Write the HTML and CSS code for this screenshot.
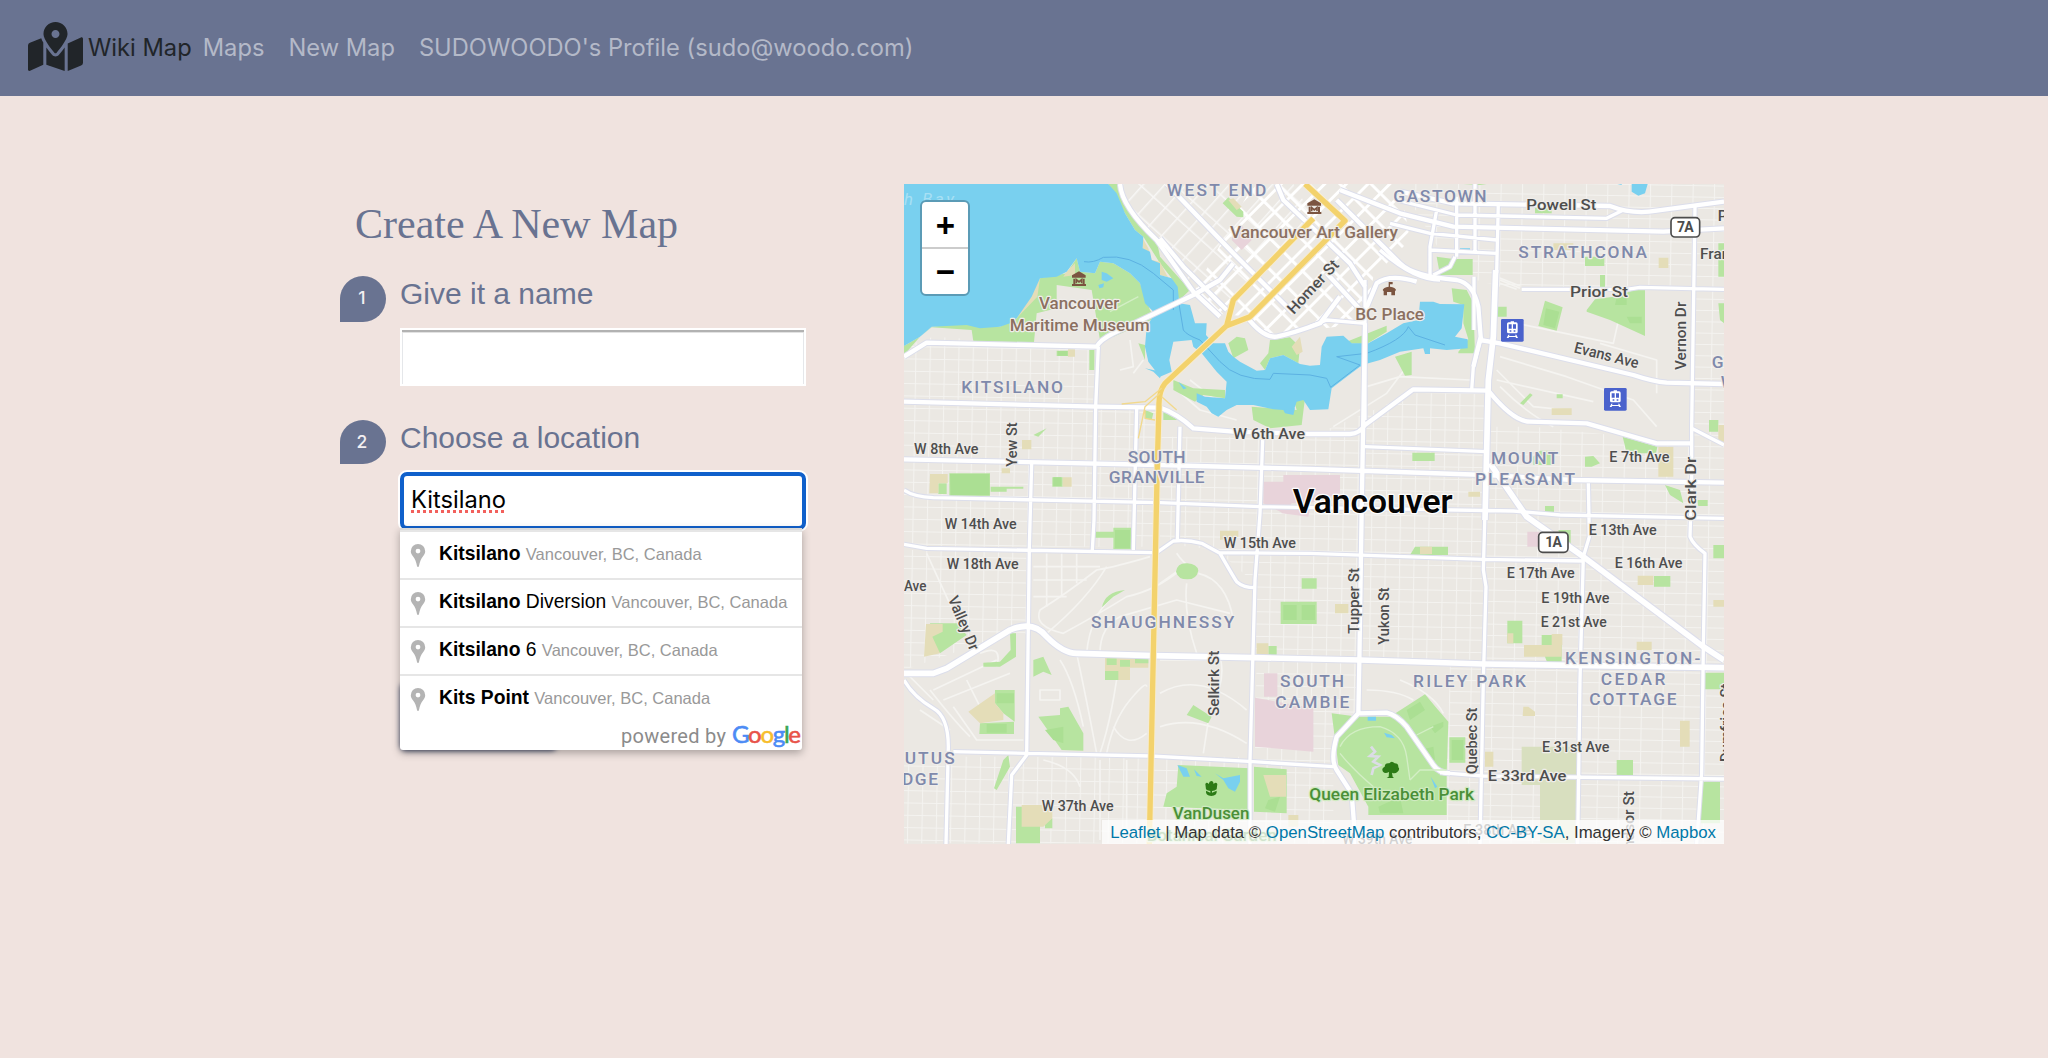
FILE: index.html
```html
<!DOCTYPE html>
<html lang="en">
<head>
<meta charset="utf-8">
<title>Wiki Map</title>
<link rel="stylesheet" href="styles.css">
</head>
<body>
<nav class="navbar">
  <a class="brand" href="#">
    <svg class="brand-icon" viewBox="0 0 576 512"><path d="M288 0c-69.590 0-126 56.410-126 126 0 56.260 82.350 158.800 113.900 196.020 6.390 7.540 17.820 7.540 24.200 0C331.650 284.800 414 182.260 414 126 414 56.410 357.590 0 288 0zm0 168c-23.200 0-42-18.800-42-42s18.800-42 42-42 42 18.800 42 42-18.800 42-42 42zM20.120 215.950A32.006 32.006 0 0 0 0 245.660v250.320c0 11.320 11.430 19.060 21.940 14.860L160 448V214.920c-8.840-15.980-16.070-31.540-21.250-46.420L20.120 215.950zM288 359.670c-14.070 0-27.380-6.180-36.510-16.960-19.660-23.200-40.570-49.620-59.490-76.720v182l192 64V266c-18.920 27.090-39.820 53.520-59.490 76.720-9.130 10.770-22.440 16.950-36.510 16.950zm266.060-198.510L416 224v288l139.880-55.950A31.996 31.996 0 0 0 576 426.340V176.020c0-11.320-11.430-19.060-21.940-14.860z"/></svg>
    <span class="brand-name">Wiki Map</span>
  </a>
  <a class="nav-link" href="#">Maps</a>
  <a class="nav-link" href="#">New Map</a>
  <a class="nav-link" href="#">SUDOWOODO's Profile (sudo@woodo.com)</a>
</nav>

<main class="content">
  <form class="map-form">
    <h1>Create A New Map</h1>
    <section class="step">
      <span class="badge">1</span>
      <div class="field">
        <label>Give it a name</label>
        <div class="input"></div>
      </div>
    </section>
    <section class="step step-location">
      <span class="badge">2</span>
      <div class="field">
        <label>Choose a location</label>
        <div class="input focused"><span class="typed">Kitsilano</span></div>
        <div class="submit"></div>
        <div class="suggestions">
          <div class="item"><svg class="pin" viewBox="0 0 15 23"><path id="pin" fill-rule="evenodd" d="M7.500 0a7.200 7.200 0 0 1 7.200 7.200c0 2-1 3.600-2.300 5.200-1.700 2.200-3.300 5.500-3.900 9.600q-.2 1-1 1t-1-1c-.6-4.100-2.200-7.400-3.900-9.600C1.300 10.800.3 9.200.3 7.200A7.200 7.200 0 0 1 7.500 0zm0 4.700a2.400 2.400 0 1 0 0 4.800 2.400 2.400 0 0 0 0-4.800z"/></svg><div><b>Kitsilano</b> <small>Vancouver, BC, Canada</small></div></div>
          <div class="item"><svg class="pin" viewBox="0 0 15 23"><use href="#pin"/></svg><div><b>Kitsilano</b> Diversion <small>Vancouver, BC, Canada</small></div></div>
          <div class="item"><svg class="pin" viewBox="0 0 15 23"><use href="#pin"/></svg><div><b>Kitsilano</b> 6 <small>Vancouver, BC, Canada</small></div></div>
          <div class="item"><svg class="pin" viewBox="0 0 15 23"><use href="#pin"/></svg><div><b>Kits Point</b> <small>Vancouver, BC, Canada</small></div></div>
          <svg class="powered" viewBox="0 0 182 28">
            <text x="1" y="21" textLength="105" class="powered-by">powered by</text>
            <text x="112" y="21" textLength="69" class="google"><tspan fill="#4c8bf5" stroke="#4c8bf5">G</tspan><tspan fill="#e8534a" stroke="#e8534a">o</tspan><tspan fill="#f7bd2d" stroke="#f7bd2d">o</tspan><tspan fill="#4c8bf5" stroke="#4c8bf5">g</tspan><tspan fill="#3aa757" stroke="#3aa757">l</tspan><tspan fill="#e8534a" stroke="#e8534a">e</tspan></text>
          </svg>
        </div>
      </div>
    </section>
  </form>

  <div class="map">
    <svg class="tiles" viewBox="12 12 2460 1980">
      <defs>
        <pattern id="blocks" width="43" height="37" patternUnits="userSpaceOnUse" patternTransform="translate(12 17) rotate(1)"><path d="M0 1.500H43M1.500 0V37"/></pattern>
        <pattern id="wide" width="64" height="34" patternUnits="userSpaceOnUse" patternTransform="translate(10 8) rotate(1)"><path d="M0 1.500H64M1.500 0V34"/></pattern>
        <pattern id="downtown" width="66" height="46" patternUnits="userSpaceOnUse" patternTransform="translate(1295 180) rotate(-45)"><path d="M0 4H66M4 0V46"/></pattern>
        <pattern id="westend" width="70" height="48" patternUnits="userSpaceOnUse" patternTransform="translate(900 180) rotate(-48)"><path d="M0 2H70M2 0V48"/></pattern>
        <path id="minor" d="M710 685L700 1110M840 740L832 1080M395 850L388 1100 380 1725 335 1785 325 1992M1088 780L1080 1000 1065 1200 1050 1740V1992M595 500L587 680 582 1020 577 1110M12 930Q40 950 100 953L780 968 1080 980 1840 993 1980 1005 2472 1015M12 1093L80 1105 760 1118M770 1118L820 1083Q860 1078 905 1090L960 1120Q1000 1190 1010 1205 1030 1223 1065 1223M955 1118L1230 1120 1750 1138 2050 1143M1395 800L1760 815M160 1715L380 1720 750 1728 1060 1745 1300 1760M1620 1778L1750 1788 2472 1797M12 1500Q40 1550 100 1585 145 1610 145 1700L138 1992M2065 910L2068 1070 2050 1130 2040 1500 2033 1992M1755 990L1750 1170 1758 1220 1750 1500 1740 1992M2385 80L2375 740V900L2370 1070Q2380 1095 2415 1120L2410 1400 2405 1780 2390 1992M1490 60L1670 105 2120 115 2170 90M1865 328H2180L2220 322 2472 328M1670 50V230M1795 70L1790 280M1725 12V220M1610 90L1590 200V300M1722 290V450M1590 210L1790 220M1470 130L1590 160 1790 180M1440 210Q1540 300 1620 300M1665 230L1650 260 1600 285M1395 720V300M2375 745L2472 795M1395 430L1280 420 1230 440M1715 630L1720 560 1745 470"/>
        <path id="major" d="M12 530L80 488 590 500Q600 480 640 460L880 345 960 300 1000 250M660 12Q665 80 770 180L880 335 960 410M800 12L1000 220 1180 400M780 175L850 260 980 390M12 665L590 680 780 683Q830 700 880 745L1000 755 1230 762H1350Q1380 760 1395 735L1540 628 1765 632Q1840 725 1890 725L2060 730 2270 790H2375M1040 410Q1090 475 1130 470 1180 460 1260 430L1320 350M12 838L780 855 1230 867 1760 885 2020 900 2472 908M1500 35L1660 70 2130 78Q2200 105 2270 92L2472 65M1320 30L1500 100 1660 140 2290 155 2472 145M1395 430L1385 990 1378 1450 1375 1600M1740 480L1800 490 2200 585Q2260 605 2300 608L2472 612M1310 60L1500 250Q1540 290 1670 300 1720 310 1735 380L1742 470 1720 560M1380 430L1430 310Q1470 280 1550 305M1375 1600L1460 1598Q1490 1605 1520 1640L1600 1755Q1615 1778 1650 1780M1375 1600L1310 1670Q1290 1740 1310 1770L1355 1840 1362 1930V1992M1130 12L1150 60 1350 250 1395 320M1280 280L1400 410"/>
        <path id="trunk" d="M12 1480H100L140 1465 330 1350Q400 1320 440 1370 490 1420 530 1420L760 1427 1060 1433 1380 1440 1750 1452 2472 1463M1787 270L1780 470 1765 600 1755 1020M1770 850L1880 1010 2050 1130 2410 1400 2472 1440"/>
      </defs>
      <rect class="land" x="12" y="12" width="2460" height="1980"/>
      <g>
        <path fill="url(#blocks)" d="M12 500L100 470 580 500 590 680 770 690 765 1100 12 1100zM12 1110H390V1360L300 1370 12 1470z"/>
        <path fill="url(#blocks)" d="M780 770L1230 770 1540 640 1760 640 1750 1440 1065 1430V1210L950 1110 780 1090zM1070 1430L1370 1440V1590L1300 1680V1990H1060zM12 1730H1040V1990H12z"/>
        <path fill="url(#wide)" d="M1500 12H2472V320H1800L1660 280zM1770 740L1900 740 2472 800V1990H1640V1790L1650 1450 1750 1440zM2380 300H2472V800H2380z"/>
        <path fill="url(#westend)" d="M660 12H1180L1240 110 1000 350 950 410 870 330 770 180 690 80z"/>
        <path fill="url(#downtown)" d="M1060 12H1500L1530 180 1420 290 1395 430 1110 465 1050 410 940 400 880 340z"/>
      </g>
      <!-- curving residential lanes -->
      <g class="lane">
        <path d="M750 1130Q650 1160 590 1170 500 1240 420 1290 400 1340 490 1360 600 1300 680 1250 770 1230 840 1170M440 1360Q560 1260 620 1160M560 1420Q570 1300 650 1240M600 1420Q600 1340 660 1310L830 1260 990 1300M895 1180Q980 1200 1000 1320M860 1210Q850 1300 890 1420M780 1210L830 1175M830 1120Q850 1150 870 1160M660 1420Q640 1600 600 1720M530 1420Q560 1560 590 1720M620 1720Q640 1620 690 1560T740 1520M640 1640Q680 1710 740 1660M780 1540Q900 1470 1040 1590M780 1640Q900 1600 1040 1690M960 1430Q980 1500 930 1590L910 1720M480 1440Q520 1500 550 1640M780 1440H1050M420 1530H480V1560H420zM430 1740Q520 1760 540 1820M600 1740V1980M680 1740V1980"/>
        <path d="M440 1120V1280M485 1120V1250M530 1120V1210M400 1160H600M400 1200H560M400 1250H500M80 1120L190 1360M100 1530L290 1440M130 1560L330 1480M160 1580L230 1680H370M90 1530Q160 1620 210 1670M200 1500L250 1600M240 1420Q310 1390 290 1460M60 1590L150 1650M20 1480L100 1560M690 480L700 560 660 570M700 580L730 540M820 620L900 690 1010 720M870 600L960 670M1800 530L2000 590 2140 640 2200 660 2270 740M1790 570L1900 680 2000 690M1850 430L2140 490 2160 400M1800 620Q1880 700 1960 740M2270 640V540L2100 490M1790 600L2080 665M1800 300L1860 325M1800 310L1850 328M1790 290L1860 318M1300 740L1460 640 1520 560M1400 620L1500 590 1710 600M1500 1500Q1600 1540 1630 1600M1400 1530Q1490 1530 1540 1560"/>
      </g>
      <g class="park">
        <path d="M530 235L540 275 585 280 600 245 640 250 690 280 720 310 750 390 765 415 640 470 600 480 590 420 575 330 470 315 470 385 410 400 402 487 220 484 215 450 95 442 60 470 12 525V498L60 470 95 440 200 430 300 440 350 415 395 350 420 295 500 280z"/>
        <path d="M625 12H655L680 80 770 180 780 230 870 330 838 360 815 295 780 250 730 170 705 150 675 100z"/>
        <path d="M985 490L1010 470 1035 475 1045 510 1000 535zM1110 480L1170 472 1200 500 1195 550 1150 525 1110 535 1095 570 1080 550 1105 520zM968 70L985 52 1030 95V112L1010 110zM820 600L880 625 975 630V655L910 645 885 665 820 630zM1055 680L1190 690 1180 655 1215 655 1205 735 1110 745 1060 720zM735 690L760 700 755 720 735 715zM790 695L835 720H790zM568 510H583V570H568zM400 765L440 745 415 770zM715 490L735 495 735 540z"/>
        <path d="M1340 485L1460 437V455L1400 492 1345 490zM1485 530L1535 515V585L1515 587zM1610 230L1660 237H1718V285H1620zM1655 325L1700 330 1720 370 1725 520H1675V515L1705 478 1690 430V375L1660 365zM1690 12H1760L1740 15zM1785 410V380H1820V410zM1905 80H1955V100H1905zM2055 230H2113V258H2055zM2100 285H2115V340H2100zM2060 390L2085 358 2140 350 2205 330H2235V468L2130 420 2060 395zM1935 362L1988 382 1970 452 1915 438zM1860 670L1890 640 1898 645 1870 675zM1970 643H1988V655H1970zM2168 770L2272 800 2268 820H2180zM2055 830L2080 828 2100 850 2075 860H2055zM1920 812H1965V855H1900V830zM1537 818H1604V843H1537zM2295 915L2340 930 2350 970 2310 945zM2393 970V960H2423V978H2395zM1935 978H1962V1000H1935z"/>
        <path d="M1295 1600L1375 1610H1470L1575 1543 1610 1585 1645 1625 1640 1780V1905H1405V1880L1350 1780 1315 1755z"/>
        <path d="M835 1755L1050 1765 1045 1890 790 1880 800 1840 830 1820zM1062 1760L1160 1768V1900L1062 1895zM415 1610L480 1605V1585L505 1580 550 1660 550 1712 485 1710zM240 1630L342 1625V1662H238zM285 1530H344V1625L310 1600 285 1570zM860 1605L880 1575 935 1610 925 1630zM330 1360H348V1430L300 1460H250V1448L300 1445 332 1410zM400 1440L430 1430 455 1485 430 1475 400 1490zM325 1725L330 1760 290 1830 282 1825 310 1740zM90 1330H170L200 1365 120 1420 97 1400z"/>
        <path d="M606 1282Q615 1235 675 1230L640 1250zM828 1175Q832 1148 862 1150T895 1172Q890 1198 862 1198T828 1175zM640 1043H693V1108H640V1073H585V1055H640zM1205 1195H1250V1226H1205zM1142 1265H1250V1332H1142zM1230 1270H1250V1332H1230zM1105 1398H1130V1425H1105zM1545 1100H1644V1125H1530zM1648 1672H1696V1748H1648zM1822 1322H1867V1390H1822zM1925 1365H1985V1448H1942L1925 1405zM2262 1188H2311V1220H2262zM2150 1740H2199V1785H2150zM2400 1805H2460V1930H2400zM2415 1478H2472V1528H2415zM2440 1095H2472V1135H2440zM1975 1050H2012V1090H1985zM2427 720H2455V755H2427zM2455 190H2472V290H2455zM348 1880H420V1990H348zM435 1915H457V1945H435zM115 910H140V942H115zM148 880H270V947H148zM272 920H370V926H320V935H272zM470 512H504V528H470zM457 892H488V920H457zM2455 370H2472V430L2460 420zM1218 900H1260V920H1218z"/>
      </g>
      <g class="pitch">
        <path d="M150 882H268V946H152zM473 513H502V527H473zM460 892H484V918H460zM2150 350L2180 345V375H2145zM2180 410H2225V430H2190zM1938 385L1978 395 1965 445 1930 435zM1520 1590L1560 1565 1575 1590 1530 1620zM1590 1640L1630 1625V1640L1605 1660zM1560 1710L1600 1700 1605 1740 1580 1735zM1435 1880L1500 1850 1510 1900H1440zM435 1650L490 1640 490 1690 460 1680zM290 1540H342V1570H290zM260 1632H320V1658H260zM1105 1860L1140 1850 1125 1895 1095 1885zM1150 1275H1190V1320H1150zM1205 1275H1245V1320H1205zM645 1050H690V1105H645zM1655 1680H1690V1740H1655z"/>
      </g>
      <g class="sand">
        <path d="M500 275L525 250V285L490 290zM395 345L420 295 412 350 350 415zM728 175L745 205 755 240 780 245 800 285 830 325 815 295 780 285 750 240 728 205zM90 882H143V910H115V940H88zM504 508H525V530H504zM366 780H394V808H366zM488 892H515V920H488zM305 865H330V880H305zM985 60L1000 55 1025 80 1010 90zM1175 500L1200 470 1208 515 1190 525zM1960 190L2020 190V210H1960zM2276 233H2305V264H2276zM1955 685H2015V705H1955zM2275 800H2320V890H2275zM1705 935H1740V950H1705zM2455 735H2472V785H2455z"/>
        <path d="M78 1332H128V1355L97 1370 120 1420 72 1430zM205 1595L285 1540V1570L310 1600 310 1620 240 1630zM615 1433H745V1463H690V1500H615zM960 1052H1015V1070L960 1080zM1070 1390H1105V1425H1070zM1305 1272H1345V1300H1305zM1560 1100H1596V1122H1560zM1822 1360H1840V1390H1822zM1955 1362H1987V1395H1955zM1872 1395H1985V1430H1872zM2213 1187H2260V1215H2213zM2210 1385H2255V1410H2210zM2340 1622H2369V1700H2340zM1870 1580H1885L1905 1595V1608H1868zM1755 1715H1780V1760H1755zM1090 1785H1158V1850H1110zM365 1875H457V1915L430 1940H365zM2440 1260H2472V1280H2440zM1165 1905H1195V1940H1165z"/>
      </g>
      <g class="park">
        <path d="M620 1435H650V1455H620zM660 1440H690V1460H660zM615 1473H655V1500H615zM705 1435H745V1450H705z"/>
      </g>
      <path class="cemetery" d="M1865 1700H2035V1990H1920V1815H1865z"/>
      <g class="hospital">
        <path d="M1150 885H1320V940L1230 970H1175L1150 1000 1090 970V905H1150zM1145 1000 1140 985H1230L1225 1010zM1065 1553L1240 1585V1715L1065 1700zM1092 1480H1132V1550H1092zM1882 1055H1918V1100H1882zM1000 160L1025 135 1055 180 1025 210 995 180z"/>
      </g>
      <g class="water">
        <path d="M12 12H625L650 40 675 100 705 150 730 170 728 205 750 215 755 240 780 250 780 285 815 295 833 320 838 370 870 375 885 430 920 430 918 465 940 490 975 490 985 515 1000 530 1020 545 1070 572 1095 570 1110 535 1150 525 1200 552 1230 557 1260 555 1265 500 1280 470 1330 467 1355 490 1405 490 1460 460 1510 430 1555 420 1560 365 1600 365 1620 372 1693 373 1685 445 1665 470 1703 478 1703 505 1640 510 1590 505V522H1575L1570 505 1500 515 1440 540 1405 550 1380 560 1340 590 1295 625 1285 688 1230 690 1210 660 1190 665 1180 695 1150 690 1120 688 1060 675 1010 675 980 690 955 710 935 700 920 680 890 665 890 640 915 650 975 655 980 605 950 575 905 520 880 500 875 480 820 485 808 540 815 575 780 590 745 545 735 500 740 440 765 400 735 370 720 310 690 280 640 250 600 245 585 280 540 275 530 235 500 275 470 290 420 295 395 350 350 415 330 430 300 440 240 445 200 435 95 440 60 470 12 498z"/>
        <path d="M605 275L620 280 640 295 620 305 605 300zM595 315L612 310 610 322 598 325zM735 565L785 575 780 595 760 575zM835 605L860 625 850 628zM1150 690L1185 685 1180 705 1155 700zM2195 12H2243L2235 40 2215 47 2195 35zM2152 12H2165V15zM1680 205H1710V218H1680zM832 1755L860 1765 870 1790 850 1790zM882 1768L905 1790 890 1788zM945 1780L970 1795 1020 1785V1805L1005 1835 985 1825 970 1800zM1403 1610H1428V1622H1403zM1452 1658L1475 1665 1485 1675 1460 1672zM1592 1790L1612 1820 1605 1825z"/>
      </g>
      <path class="ferry" d="M552 245Q580 250 610 232 690 222 760 280L820 330V390M835 360L850 450Q860 465 900 480L960 545Q1010 600 1110 598L1120 580 1230 585 1280 595 1292 622 1380 555 1310 530 1400 520Q1510 480 1525 440L1545 465 1635 495"/>
      <!-- road casings first, then the white fill over them -->
      <g class="casing">
        <use href="#minor" class="w-minor"/><use href="#major" class="w-major"/><use href="#trunk" class="w-trunk"/>
      </g>
      <g class="road">
        <use href="#minor" class="w-minor"/><use href="#major" class="w-major"/><use href="#trunk" class="w-trunk"/>
      </g>
      <path class="highway-edge" d="M1215 12L1335 122 1050 410 980 437 795 610Q775 635 777 680L772 850 748 1992M1240 115L1000 360 980 437"/>
      <path class="highway" d="M1215 12L1335 122 1050 410 980 437 795 610Q775 635 777 680L772 850 748 1992M1240 115L1000 360 980 437"/>
      <path class="ramp" d="M665 672L735 665 785 625M715 775L735 680 780 640M735 690V715L765 720M785 650L830 690"/>
      <path class="trail" d="M1320 1700Q1350 1640 1440 1640 1510 1660 1520 1730L1530 1800M1320 1720Q1360 1770 1420 1820M1530 1800L1560 1770H1640M1550 1665L1600 1640M630 395L715 350"/>

      <!-- points of interest -->
      <g id="museum" fill="#7b5440"><path d="M516 286L537 274 557 286V293H516zM520 296H526V312H520zM548 296H554V312H548zM516 312H558V318H516z"/><path d="M529 310V299L537 306 545 299V310" fill="none" stroke="#7b5440" stroke-width="5"/></g>
      <use href="#museum" x="706" y="-216"/>
      <path fill="#7b5440" fill-rule="evenodd" d="M1466 306H1478V313H1470V320Q1487 323 1488 330L1485 334V346H1474V336H1461V346H1451V334L1448 330Q1450 323 1466 320z"/>
      <g id="train"><rect x="1803" y="417" width="68" height="68" rx="4" fill="#4a62cc"/><path fill="#fff" fill-rule="evenodd" d="M1832 424H1842V427H1848Q1853 427 1853 432V455Q1853 460 1848 460H1826Q1821 460 1821 455V432Q1821 427 1826 427H1832zM1826 433V446H1835V433zM1839 433V446H1848V433zM1829 451V455H1834V451zM1841 451V455H1846V451zM1825 464H1829L1827 468H1847L1845 464H1849L1854 474H1848L1847 471H1827L1826 474H1820z"/></g>
      <use href="#train" x="309" y="207"/>
      <path fill="#2c7a16" d="M916 1812Q920 1805 926 1812 928 1803 934 1803T941 1812Q948 1805 952 1812L950 1828Q944 1833 936 1833V1838L950 1832Q952 1846 934 1848 916 1846 918 1832L931 1838V1833Q920 1832 918 1828z"/>
      <path fill="#2c7a16" d="M1449 1775Q1443 1765 1454 1760 1455 1748 1468 1750 1475 1741 1484 1750 1496 1750 1495 1762 1501 1768 1492 1776 1485 1782 1476 1778L1478 1790 1482 1794H1460L1466 1790 1467 1776Q1455 1782 1449 1775z"/>
      <path d="M1413 1700L1425 1715 1410 1728 1435 1730 1420 1745 1440 1755 1420 1765 1415 1785" fill="none" stroke="#dcdce6" stroke-width="8"/>
      <g class="shield"><rect x="2313" y="113" width="86" height="58" rx="12"/><rect x="1916" y="1057" width="88" height="60" rx="12"/></g>
      <g class="shield-text"><text x="2356" y="156" textLength="50">7A</text><text x="1961" y="1102" textLength="50">1A</text></g>

      <g class="bay"><text x="12" y="76" textLength="150">h Bay</text></g>
      <g class="area">
        <text x="801" y="48" textLength="298">WEST END</text>
        <text x="1480" y="67" textLength="280">GASTOWN</text>
        <text x="1855" y="233" textLength="386">STRATHCONA</text>
        <text x="184" y="640" textLength="305">KITSILANO</text>
        <text x="683" y="849" textLength="174">SOUTH</text>
        <text x="626" y="908" textLength="288">GRANVILLE</text>
        <text x="1773" y="853" textLength="202">MOUNT</text>
        <text x="1725" y="914" textLength="300">PLEASANT</text>
        <text x="573" y="1344" textLength="430">SHAUGHNESSY</text>
        <text x="1140" y="1521" textLength="192">SOUTH</text>
        <text x="1126" y="1583" textLength="222">CAMBIE</text>
        <text x="1539" y="1522" textLength="339">RILEY PARK</text>
        <text x="1995" y="1452" textLength="406">KENSINGTON-</text>
        <text x="2102" y="1515" textLength="194">CEDAR</text>
        <text x="2068" y="1576" textLength="262">COTTAGE</text>
        <text x="14" y="1751" textLength="150">UTUS</text>
        <text x="6" y="1814" textLength="108">DGE</text>
        <text x="2435" y="563">G</text>
        <text x="2462" y="624">W</text>
      </g>
      <g class="poi">
        <text x="417" y="388" textLength="241" lengthAdjust="spacingAndGlyphs">Vancouver</text>
        <text x="329" y="453" textLength="420" lengthAdjust="spacingAndGlyphs">Maritime Museum</text>
        <text x="990" y="174" textLength="504" lengthAdjust="spacingAndGlyphs">Vancouver Art Gallery</text>
        <text x="1366" y="421" textLength="206" lengthAdjust="spacingAndGlyphs">BC Place</text>
      </g>
      <g class="poi green">
        <text x="818" y="1916" textLength="230" lengthAdjust="spacingAndGlyphs">VanDusen</text>
        <text x="740" y="1982" textLength="390" lengthAdjust="spacingAndGlyphs">Botanical Garden</text>
        <text x="1228" y="1859" textLength="494" lengthAdjust="spacingAndGlyphs">Queen Elizabeth Park</text>
      </g>
      <g class="street">
        <text x="42" y="821" textLength="193" lengthAdjust="spacingAndGlyphs">W 8th Ave</text>
        <text x="999" y="777" textLength="216" lengthAdjust="spacingAndGlyphs">W 6th Ave</text>
        <text x="134" y="1048" textLength="216" lengthAdjust="spacingAndGlyphs">W 14th Ave</text>
        <text x="140" y="1166" textLength="216" lengthAdjust="spacingAndGlyphs">W 18th Ave</text>
        <text x="12" y="1234" textLength="67" lengthAdjust="spacingAndGlyphs">Ave</text>
        <text x="971" y="1105" textLength="217" lengthAdjust="spacingAndGlyphs">W 15th Ave</text>
        <text x="425" y="1893" textLength="216" lengthAdjust="spacingAndGlyphs">W 37th Ave</text>
        <text x="1327" y="1993" textLength="210" lengthAdjust="spacingAndGlyphs">W 39th Ave</text>
        <text x="1690" y="1965" textLength="205" lengthAdjust="spacingAndGlyphs">E 38th Ave</text>
        <text x="1879" y="90" textLength="210" lengthAdjust="spacingAndGlyphs">Powell St</text>
        <text x="2010" y="351" textLength="174" lengthAdjust="spacingAndGlyphs">Prior St</text>
        <text x="2400" y="237">Fran</text>
        <text x="2453" y="124">P</text>
        <text x="2128" y="845" textLength="180" lengthAdjust="spacingAndGlyphs">E 7th Ave</text>
        <text x="2066" y="1066" textLength="204" lengthAdjust="spacingAndGlyphs">E 13th Ave</text>
        <text x="2144" y="1165" textLength="203" lengthAdjust="spacingAndGlyphs">E 16th Ave</text>
        <text x="1820" y="1193" textLength="204" lengthAdjust="spacingAndGlyphs">E 17th Ave</text>
        <text x="1924" y="1269" textLength="204" lengthAdjust="spacingAndGlyphs">E 19th Ave</text>
        <text x="1922" y="1342" textLength="198" lengthAdjust="spacingAndGlyphs">E 21st Ave</text>
        <text x="1926" y="1715" textLength="202" lengthAdjust="spacingAndGlyphs">E 31st Ave</text>
        <text x="1763" y="1803" textLength="236" lengthAdjust="spacingAndGlyphs">E 33rd Ave</text>
        <text transform="translate(350 860) rotate(-90)" textLength="133" lengthAdjust="spacingAndGlyphs">Yew St</text>
        <text transform="translate(1181 405) rotate(-47)" textLength="203" lengthAdjust="spacingAndGlyphs">Homer St</text>
        <text transform="translate(2020 517) rotate(14)" textLength="198" lengthAdjust="spacingAndGlyphs">Evans Ave</text>
        <text transform="translate(2358 570) rotate(-90)" textLength="205" lengthAdjust="spacingAndGlyphs">Vernon Dr</text>
        <text transform="translate(2387 1022) rotate(-90)" textLength="192" lengthAdjust="spacingAndGlyphs">Clark Dr</text>
        <text transform="translate(143 1256) rotate(67)" textLength="172" lengthAdjust="spacingAndGlyphs">Valley Dr</text>
        <text transform="translate(956 1608) rotate(-90)" textLength="196" lengthAdjust="spacingAndGlyphs">Selkirk St</text>
        <text transform="translate(1376 1361) rotate(-90)" textLength="197" lengthAdjust="spacingAndGlyphs">Tupper St</text>
        <text transform="translate(1467 1394) rotate(-90)" textLength="172" lengthAdjust="spacingAndGlyphs">Yukon St</text>
        <text transform="translate(1730 1783) rotate(-90)" textLength="200" lengthAdjust="spacingAndGlyphs">Quebec St</text>
        <text transform="translate(2203 2060) rotate(-90)" textLength="227" lengthAdjust="spacingAndGlyphs">Windsor St</text>
        <text transform="translate(2492 1746) rotate(-90)" textLength="235" lengthAdjust="spacingAndGlyphs">Dumfries St</text>
      </g>
      <text class="city" x="1178" y="999" textLength="480" lengthAdjust="spacingAndGlyphs">Vancouver</text>
    </svg>
    <div class="zoom"><span>+</span><span>−</span></div>
    <div class="attribution"><a>Leaflet</a> | Map data © <a>OpenStreetMap</a> contributors, <a>CC-BY-SA</a>, Imagery © <a>Mapbox</a></div>
  </div>
</main>
</body>
</html>
```
FILE: styles.css
```css
* { box-sizing: border-box; }

body {
  margin: 0;
  min-height: 1058px;
  background: #f0e3df;
  font-family: Inter, sans-serif;
  font-size: 23.7px;
  overflow: hidden;
}

.navbar {
  display: flex;
  align-items: center;
  height: 96px;
  padding: 0 28px 2px;
  background: #697391;
  white-space: nowrap;
}
.navbar a { text-decoration: none; }
.brand { display: flex; align-items: center; color: #212529; margin-right: 11px; }
.brand-icon { width: 55px; height: 49px; margin-right: 5px; fill: #212529; position: relative; top: -1px; }
.nav-link { color: #b4b9c8; margin-right: 24px; }

.content { display: flex; padding: 88px 0 0 340px; }
.map-form { width: 564px; color: #697391; }
h1 {
  margin: 16px 0 0 15px;
  font: 400 42px/48px "Liberation Serif", serif;
}
.step { display: flex; margin-top: 28px; height: 116px; }
.badge {
  width: 46px;
  height: 46px;
  margin-right: 14px;
  padding: 0 2px 3px 0;
  display: flex;
  align-items: center;
  justify-content: center;
  background: #697391;
  border-radius: 50% 50% 50% 0;
  color: #f2eff2;
  font-size: 17.5px;
  font-weight: 500;
}
.step-location .badge { height: 44px; padding-bottom: 1px; }
.field { position: relative; }
label {
  display: block;
  height: 52px;
  font: 30px/35px "Liberation Sans", sans-serif;
}
.input {
  width: 406px;
  height: 58px;
  background: #fff;
  border: 2px solid #fff;
  box-shadow: inset 0 2px 0 #b2b2b2, inset 0 3px 0 #e2e2e2, inset 1px 0 0 #e5e7ea, inset -1px 0 0 #e5e7ea;
}
.input.focused {
  display: flex;
  align-items: center;
  padding: 0 7px 4px;
  color: #000;
  border: 4px solid #1060cb;
  border-radius: 7px;
  box-shadow: 0 0 0 2px #fff;
}
.typed {
  text-decoration: underline dotted #f2605c 3px;
  text-underline-offset: 2px;
  text-decoration-skip-ink: none;
}
.submit {
  position: absolute;
  left: 0;
  top: 262px;
  width: 157px;
  height: 68px;
  background: #697391;
  border-radius: 6px;
  box-shadow: 0 1px 5px #47506f;
}
.suggestions {
  position: absolute;
  left: 0;
  top: 108px;
  width: 402px;
  height: 222px;
  background: #fff;
  border-top: 2px solid #d9d9d9;
  border-radius: 0 0 3px 3px;
  box-shadow: 0 3px 9px rgba(0, 0, 0, .3);
  color: #000;
  font: 19.3px/44px "Liberation Sans", sans-serif;
  white-space: nowrap;
}
.item { display: flex; height: 48px; padding-left: 10px; border-top: 2px solid #e6e6e6; }
.item small { font-size: 16.5px; color: #999; }
.pin { width: 16px; height: 23px; fill: #b4b4b4; margin: 12px 13px 0 0; }
.powered { display: block; width: 182px; height: 28px; margin-left: auto; }
.powered text { font-family: Roboto, sans-serif; font-size: 20px; fill: #8b8b8b; }
.powered .google { font-family: Lato, sans-serif; font-size: 24px; stroke-width: .6; }

.map { position: relative; width: 820px; height: 660px; overflow: hidden; }
.tiles { display: block; width: 820px; height: 660px; }
pattern path { fill: none; stroke: #f4f3f0; stroke-width: 3; }
#downtown path { stroke: #fff; stroke-width: 9; }
#westend path { stroke-width: 5; stroke: #f8f7f6; }
.land { fill: #ebe8e3; }
.park { fill: #b7e4a0; }
.pitch { fill: #abdf93; }
.sand { fill: #e4ddb8; }
.cemetery { fill: #d8dfbf; }
.hospital { fill: #e8d3da; }
.water { fill: #79d0ef; }
.lane, .trail, .ferry, .ramp, .casing, .road, .highway, .highway-edge { fill: none; stroke-linejoin: round; }
.lane { stroke: #f5f4f1; stroke-width: 5; }
.trail { stroke: #d3eec5; stroke-width: 4; }
.ferry { stroke: #5cb1e2; stroke-width: 3; }
.ramp { stroke: #f2d98c; stroke-width: 4; }
.casing { stroke: #dcdeeb; }
.casing .w-minor { stroke-width: 16; }
.casing .w-major { stroke-width: 19; }
.casing .w-trunk { stroke-width: 23; }
.road { stroke: #fff; }
.road .w-minor { stroke-width: 10; }
.road .w-major { stroke-width: 13; }
.road .w-trunk { stroke-width: 17; }
.highway { stroke: #f3d26c; stroke-width: 16; }
.highway-edge { stroke: #f7ecd0; stroke-width: 21; }

.tiles text { font-family: Roboto, sans-serif; paint-order: stroke; stroke-linejoin: round; stroke: #efedea; stroke-width: 7; }
.area text { font-size: 52px; fill: #7f89ab; font-weight: 500; }
.street text { font-size: 46px; fill: #4e4e4e; font-weight: 500; }
.poi text { font-size: 51px; fill: #8b7061; font-weight: 500; }
.poi.green text { fill: #4a8f38; stroke: #cfeac0; }
.tiles .bay text { font-size: 50px; font-style: italic; fill: #a8e0f4; stroke: none; }
.tiles .city { font-size: 102px; fill: #050505; font-weight: 600; stroke: #fff; }
.shield rect { fill: #fff; stroke: #4c4c4c; stroke-width: 5; }
.tiles .shield-text text { font-size: 42px; font-weight: 700; fill: #4c4c4c; text-anchor: middle; stroke: none; }

.zoom {
  position: absolute;
  left: 16px;
  top: 16px;
  width: 50px;
  border: 2px solid #5b9bb6;
  border-radius: 6px;
  background: #fff;
  overflow: hidden;
}
.zoom span {
  display: block;
  height: 45px;
  padding-left: 1px;
  text-align: center;
  font: 700 33px/47px "Liberation Sans", sans-serif;
  color: #000;
}
.zoom span + span { height: 47px; border-top: 2px solid #ccc; line-height: 45px; }
.attribution {
  position: absolute;
  right: 0;
  bottom: 0;
  height: 24px;
  padding: 1px 8px 0;
  background: rgba(255, 255, 255, .75);
  color: #333;
  font: 16.8px/24px "Liberation Sans", sans-serif;
  white-space: nowrap;
}
.attribution a { color: #0078a8; }
```
